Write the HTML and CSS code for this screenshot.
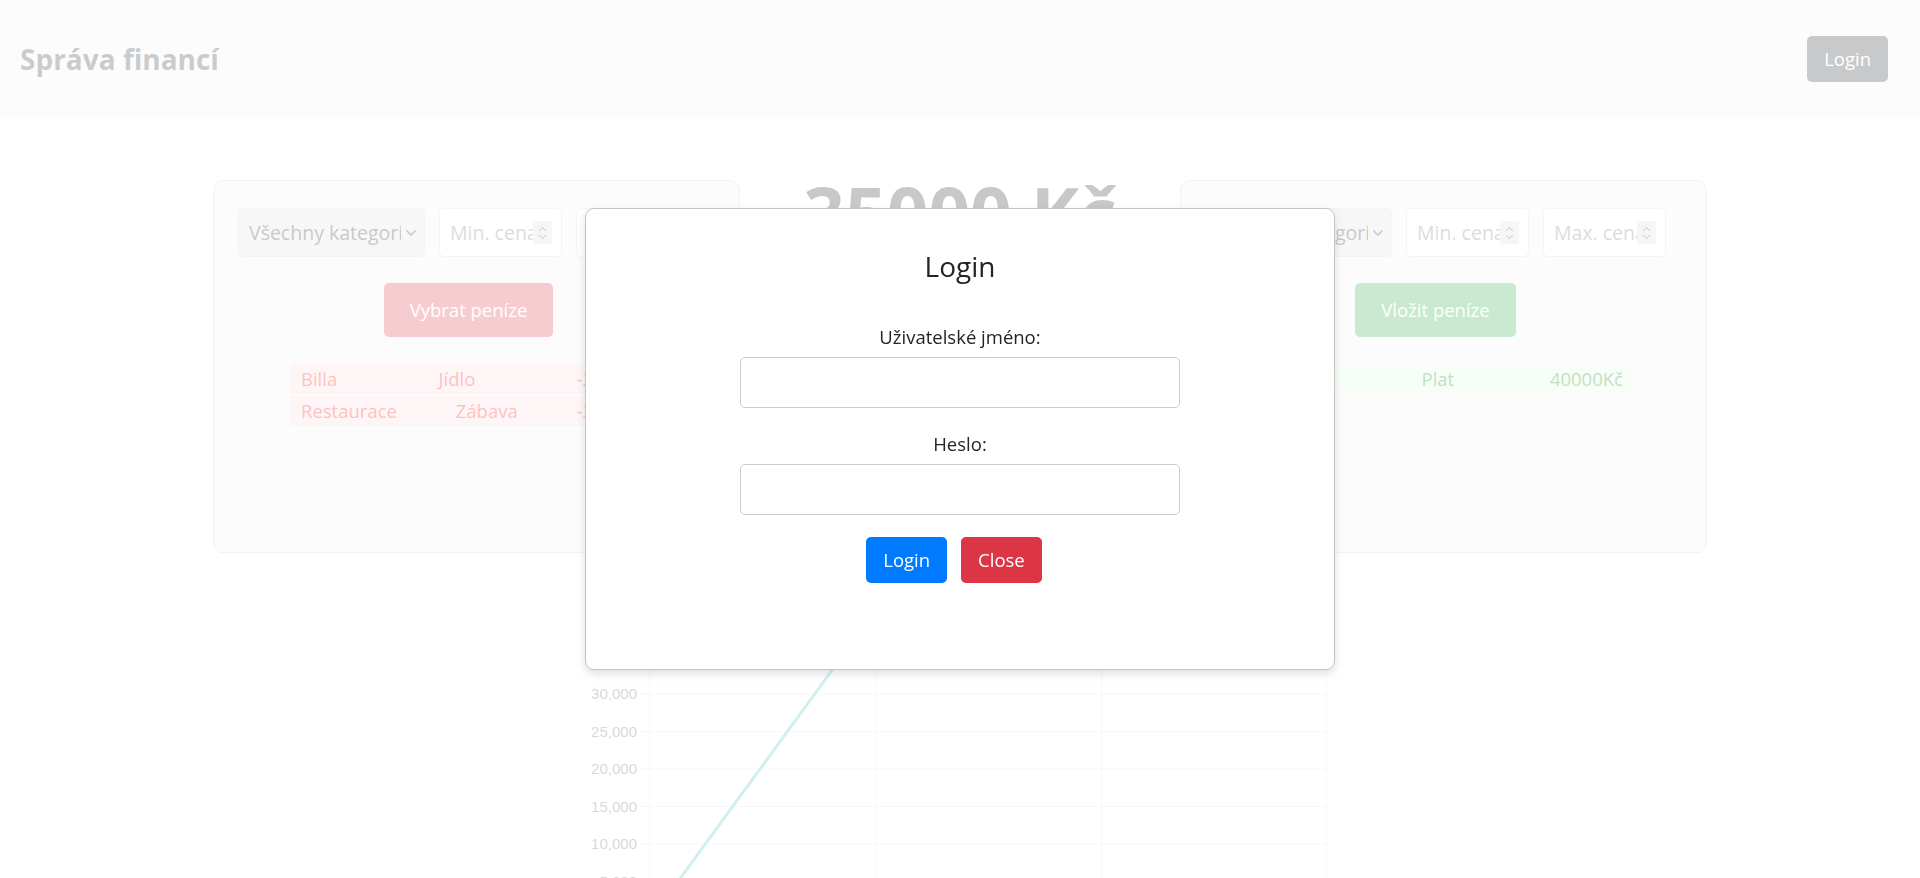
FILE: index.html
```html
<!DOCTYPE html>
<html lang="cs">
<head>
<meta charset="utf-8">
<title>Správa financí</title>
<link rel="stylesheet" href="styles.css">
</head>
<body>
<header class="navbar">
  <span class="brand">Správa financí</span>
  <button class="btn btn-dark">Login</button>
</header>

<main class="dashboard">
  <section class="card">
    <div class="filters">
      <div class="select-wrap">
        <select class="select"><option>Všechny kategorie</option></select>
        <svg class="chevron" width="12" height="8" viewBox="0 0 12 8"><polyline points="1.5,1.5 6,6 10.5,1.5" fill="none" stroke="#333" stroke-width="1.6"/></svg>
      </div>
      <div class="num-input">
        <input type="text" placeholder="Min. cena">
        <span class="spin"><svg width="9" height="16" viewBox="0 0 9 16"><polyline points="1,6 4.5,2.5 8,6" fill="none" stroke="#666" stroke-width="1.2"/><polyline points="1,10 4.5,13.5 8,10" fill="none" stroke="#666" stroke-width="1.2"/></svg></span>
      </div>
      <div class="num-input">
        <input type="text" placeholder="Max. cena">
        <span class="spin"><svg width="9" height="16" viewBox="0 0 9 16"><polyline points="1,6 4.5,2.5 8,6" fill="none" stroke="#666" stroke-width="1.2"/><polyline points="1,10 4.5,13.5 8,10" fill="none" stroke="#666" stroke-width="1.2"/></svg></span>
      </div>
    </div>
    <div class="card-action"><button class="btn btn-lg btn-danger">Vybrat peníze</button></div>
    <div class="rows rows-out">
      <div class="row row-out"><span>Billa</span><span>Jídlo</span><span>-2000Kč</span></div>
      <div class="row row-out"><span>Restaurace</span><span>Zábava</span><span>-3000Kč</span></div>
    </div>
  </section>

  <div class="balance"><h1 class="amount">35000 Kč</h1></div>

  <section class="card">
    <div class="filters">
      <div class="select-wrap">
        <select class="select"><option>Všechny kategorie</option></select>
        <svg class="chevron" width="12" height="8" viewBox="0 0 12 8"><polyline points="1.5,1.5 6,6 10.5,1.5" fill="none" stroke="#333" stroke-width="1.6"/></svg>
      </div>
      <div class="num-input">
        <input type="text" placeholder="Min. cena">
        <span class="spin"><svg width="9" height="16" viewBox="0 0 9 16"><polyline points="1,6 4.5,2.5 8,6" fill="none" stroke="#666" stroke-width="1.2"/><polyline points="1,10 4.5,13.5 8,10" fill="none" stroke="#666" stroke-width="1.2"/></svg></span>
      </div>
      <div class="num-input">
        <input type="text" placeholder="Max. cena">
        <span class="spin"><svg width="9" height="16" viewBox="0 0 9 16"><polyline points="1,6 4.5,2.5 8,6" fill="none" stroke="#666" stroke-width="1.2"/><polyline points="1,10 4.5,13.5 8,10" fill="none" stroke="#666" stroke-width="1.2"/></svg></span>
      </div>
    </div>
    <div class="card-action"><button class="btn btn-lg btn-success">Vložit peníze</button></div>
    <div class="rows rows-in">
      <div class="row row-in"><span>Odměna</span><span>Plat</span><span>40000Kč</span></div>
    </div>
  </section>
</main>

<div class="chart">
  <svg width="760" height="360" viewBox="0 0 760 360">
    <g stroke="#e0e0e0" stroke-width="1">
      <line x1="60" y1="346" x2="746" y2="346"/>
      <line x1="60" y1="308.5" x2="746" y2="308.5"/>
      <line x1="60" y1="271" x2="746" y2="271"/>
      <line x1="60" y1="233.5" x2="746" y2="233.5"/>
      <line x1="60" y1="196" x2="746" y2="196"/>
      <line x1="60" y1="158.5" x2="746" y2="158.5"/>
      <line x1="60" y1="121" x2="746" y2="121"/>
      <line x1="60" y1="83.5" x2="746" y2="83.5"/>
      <line x1="60" y1="46" x2="746" y2="46"/>
      <line x1="69.5" y1="30" x2="69.5" y2="355"/>
      <line x1="295.5" y1="30" x2="295.5" y2="355"/>
      <line x1="521.5" y1="30" x2="521.5" y2="355"/>
      <line x1="746.5" y1="30" x2="746.5" y2="355"/>
    </g>
    <g font-family="Liberation Sans, Arial, sans-serif" font-size="15" fill="#666" text-anchor="end">
      <text x="57" y="351">0</text>
      <text x="57" y="313.5">5,000</text>
      <text x="57" y="276">10,000</text>
      <text x="57" y="238.5">15,000</text>
      <text x="57" y="201">20,000</text>
      <text x="57" y="163.5">25,000</text>
      <text x="57" y="126">30,000</text>
      <text x="57" y="88.5">35,000</text>
      <text x="57" y="51">40,000</text>
    </g>
    <polyline points="69.5,347.5 295.5,37.7 521.5,68.5 746.5,83.5" fill="none" stroke="rgb(75,192,192)" stroke-width="3"/>
  </svg>
</div>

<div class="backdrop"></div>

<div class="modal-layer">
  <div class="modal">
    <h2 class="modal-title">Login</h2>
    <div class="field">
      <label for="user">Uživatelské jméno:</label>
      <input id="user" type="text">
    </div>
    <div class="field">
      <label for="pass">Heslo:</label>
      <input id="pass" type="password">
    </div>
    <div class="actions">
      <button class="btn btn-primary">Login</button>
      <button class="btn btn-danger">Close</button>
    </div>
  </div>
</div>
</body>
</html>
```
FILE: styles.css
```css
html, body {
  height: 878px;
  overflow: hidden;
}

body {
  margin: 0;
  font-family: "Open Sans", "Noto Sans", sans-serif;
  font-size: 18.5px;
  color: #212529;
  background: #fff;
}

.navbar {
  height: 118px;
  box-sizing: border-box;
  background: #f3f4f5;
  display: flex;
  align-items: center;
  justify-content: space-between;
  padding: 0 32px 0 20px;
}

.brand {
  font-size: 28px;
  font-weight: 700;
  color: #2f3236;
}

.btn {
  font-family: inherit;
  font-size: 18.5px;
  line-height: 30px;
  padding: 7px 16px;
  border: 1px solid transparent;
  border-radius: 5px;
  color: #fff;
  cursor: pointer;
}

.btn-lg {
  padding: 11px 25px;
}

.btn-dark {
  background: #25292d;
}

.btn-danger {
  background: #dc3545;
}

.btn-success {
  background: #28a745;
}

.btn-primary {
  background: #007bff;
}

.dashboard {
  display: flex;
  align-items: flex-start;
  width: 1494px;
  margin: 52px auto 0;
}

.card {
  width: 527px;
  height: 373px;
  flex: none;
  box-sizing: border-box;
  margin-top: 10px;
  background: #f3f3f3;
  border: 1px solid #cdcdcd;
  border-radius: 10px;
  padding: 27px 40px 0 24px;
}

.balance {
  flex: 1;
  text-align: center;
}

.amount {
  margin: 0;
  font-size: 73px;
  font-weight: 700;
  line-height: 86px;
  color: #212529;
}

.filters {
  display: flex;
  gap: 14px;
}

.select-wrap {
  width: 187px;
  height: 49px;
  box-sizing: border-box;
  display: flex;
  align-items: center;
  background: #dfe0e1;
  border: 1px solid #cfd3d6;
  border-radius: 5px;
  padding-right: 7px;
}

.select {
  appearance: none;
  -webkit-appearance: none;
  flex: 1;
  min-width: 0;
  height: 100%;
  border: 0;
  background: transparent;
  font-family: inherit;
  font-size: 19.5px;
  color: #212529;
  padding: 0 0 0 10px;
  outline: none;
}

.chevron {
  flex: none;
  margin-left: 4px;
}

.num-input {
  width: 123px;
  height: 49px;
  box-sizing: border-box;
  display: flex;
  align-items: center;
  background: #fff;
  border: 1px solid #ced4da;
  border-radius: 5px;
  padding: 0 9px 0 10px;
}

.num-input input {
  flex: 1;
  min-width: 0;
  width: 60px;
  border: 0;
  outline: 0;
  padding: 0;
  background: transparent;
  font-family: inherit;
  font-size: 19.5px;
  color: #212529;
}

.num-input input::placeholder {
  color: #6c757d;
}

.spin {
  flex: none;
  width: 19px;
  height: 23px;
  background: #dadada;
  display: flex;
  align-items: center;
  justify-content: center;
}

.card-action {
  display: flex;
  justify-content: center;
  margin-top: 26px;
}

.rows {
  margin-top: 27px;
}

.rows-out {
  width: 366px;
  margin-left: 52px;
}

.rows-in {
  width: 394px;
  margin-left: 35px;
}

.row {
  display: flex;
  justify-content: space-between;
  height: 30px;
  line-height: 30px;
  padding: 0 11px;
  margin-bottom: 2px;
}

.row-out {
  background: #fbd9d9;
  color: #ff0000;
}

.row-in {
  background: #e0f6e0;
  color: #008000;
}

.chart {
  width: 760px;
  margin: 20px auto 0;
}

.chart svg {
  display: block;
}

.backdrop {
  position: fixed;
  inset: 0;
  background: rgba(255, 255, 255, 0.75);
  z-index: 10;
}

.modal-layer {
  position: fixed;
  inset: 0;
  display: flex;
  align-items: center;
  justify-content: center;
  z-index: 20;
}

.modal {
  width: 750px;
  height: 462px;
  box-sizing: border-box;
  background: #fff;
  border: 1px solid #c4c4c4;
  border-radius: 9px;
  box-shadow: 0 4px 10px rgba(0, 0, 0, 0.12);
  padding-top: 37px;
  display: flex;
  flex-direction: column;
  align-items: center;
}

.modal-title {
  margin: 0 0 36px;
  font-size: 28px;
  font-weight: 400;
  line-height: 40px;
}

.field {
  display: flex;
  flex-direction: column;
  align-items: center;
}

.field + .field {
  margin-top: 21px;
}

.field label {
  line-height: 30px;
  margin-bottom: 5px;
}

.field input {
  width: 440px;
  height: 51px;
  box-sizing: border-box;
  border: 1px solid #cccccc;
  border-radius: 5px;
  font-family: inherit;
  font-size: 18.5px;
  padding: 0 12px;
  outline: none;
}

.actions {
  display: flex;
  gap: 14px;
  margin-top: 22px;
  margin-right: 12px;
}
```
